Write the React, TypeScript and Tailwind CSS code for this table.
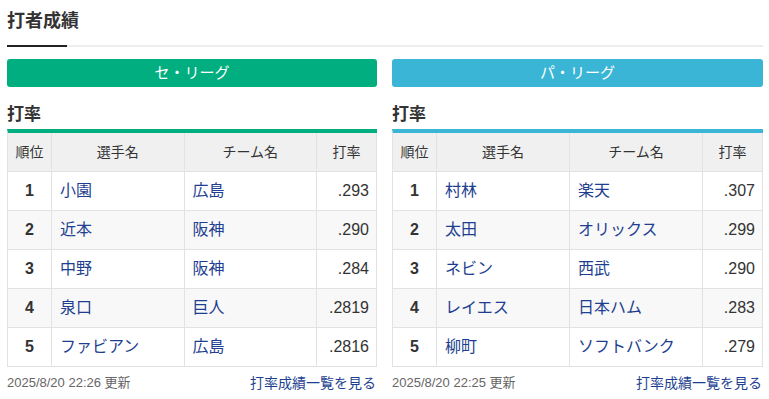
import React from "react";

type Row = { rank: number; name: string; team: string; avg: string };

const ce: Row[] = [
  { rank: 1, name: "小園", team: "広島", avg: ".293" },
  { rank: 2, name: "近本", team: "阪神", avg: ".290" },
  { rank: 3, name: "中野", team: "阪神", avg: ".284" },
  { rank: 4, name: "泉口", team: "巨人", avg: ".2819" },
  { rank: 5, name: "ファビアン", team: "広島", avg: ".2816" },
];

const pa: Row[] = [
  { rank: 1, name: "村林", team: "楽天", avg: ".307" },
  { rank: 2, name: "太田", team: "オリックス", avg: ".299" },
  { rank: 3, name: "ネビン", team: "西武", avg: ".290" },
  { rank: 4, name: "レイエス", team: "日本ハム", avg: ".283" },
  { rank: 5, name: "柳町", team: "ソフトバンク", avg: ".279" },
];

function League({
  label,
  rows,
  updated,
  green,
}: {
  label: string;
  rows: Row[];
  updated: string;
  green: boolean;
}) {
  return (
    <div className="flex flex-col">
      <div
        className={
          "h-[28px] rounded-[3px] flex items-center justify-center text-white text-[15px] " +
          (green ? "bg-[#00ae80]" : "bg-[#3ab5d6]")
        }
      >
        {label}
      </div>
      <div className="mt-[16px] mb-[2px] h-[24px] leading-[24px] text-[17px] font-bold text-[#333]">
        打率
      </div>
      <div
        className={
          "border-t-4 border-l border-[#e2e2e2] " +
          (green ? "border-t-[#00ae80]" : "border-t-[#3ab5d6]")
        }
      >
        <div className="grid grid-cols-[44px_1fr_1fr_60px] h-[39px] bg-[#f0f0f0] text-[14px] text-[#333]">
          <div className="flex items-center justify-center border-r border-b border-[#e2e2e2]">順位</div>
          <div className="flex items-center justify-center border-r border-b border-[#e2e2e2]">選手名</div>
          <div className="flex items-center justify-center border-r border-b border-[#e2e2e2]">チーム名</div>
          <div className="flex items-center justify-center border-r border-b border-[#e2e2e2]">打率</div>
        </div>
        {rows.map((r, i) => (
          <div
            key={r.rank}
            className={
              "grid grid-cols-[44px_1fr_1fr_60px] h-[39px] text-[16px] " +
              (i % 2 === 1 ? "bg-[#f8f8f8]" : "bg-white")
            }
          >
            <div className="flex items-center justify-center border-r border-b border-[#e2e2e2] font-bold text-[#333]">
              {r.rank}
            </div>
            <div className="flex items-center pl-[8px] border-r border-b border-[#e2e2e2] text-[#1e3f91]">
              {r.name}
            </div>
            <div className="flex items-center pl-[8px] border-r border-b border-[#e2e2e2] text-[#1e3f91]">
              {r.team}
            </div>
            <div className="flex items-center justify-end pr-[7px] border-r border-b border-[#e2e2e2] text-[#333]">
              {r.avg}
            </div>
          </div>
        ))}
      </div>
      <div className="mt-[6px] h-[20px] flex items-center justify-between">
        <span className="text-[13px] text-[#666]">{updated}</span>
        <span className="text-[14px] text-[#1e3f91] pr-[1px]">打率成績一覧を見る</span>
      </div>
    </div>
  );
}

export default function App() {
  return (
    <div
      className="w-[769px] h-[399px] bg-white overflow-hidden pl-[7px] pr-[6px]"
      style={{ fontFamily: '"Liberation Sans", "Noto Sans CJK JP", sans-serif' }}
    >
      <div className="pt-[9px] h-[32px] leading-[24px] text-[18px] font-bold text-[#333]">
        打者成績
      </div>
      <div className="mt-[13px] flex h-[2px]">
        <div className="w-[60px] bg-[#222]" />
        <div className="flex-1 bg-[#eeeeee]" />
      </div>
      <div className="mt-[12px] grid grid-cols-[370px_371px] gap-[15px]">
        <League label="セ・リーグ" rows={ce} updated="2025/8/20 22:26 更新" green={true} />
        <League label="パ・リーグ" rows={pa} updated="2025/8/20 22:25 更新" green={false} />
      </div>
    </div>
  );
}
